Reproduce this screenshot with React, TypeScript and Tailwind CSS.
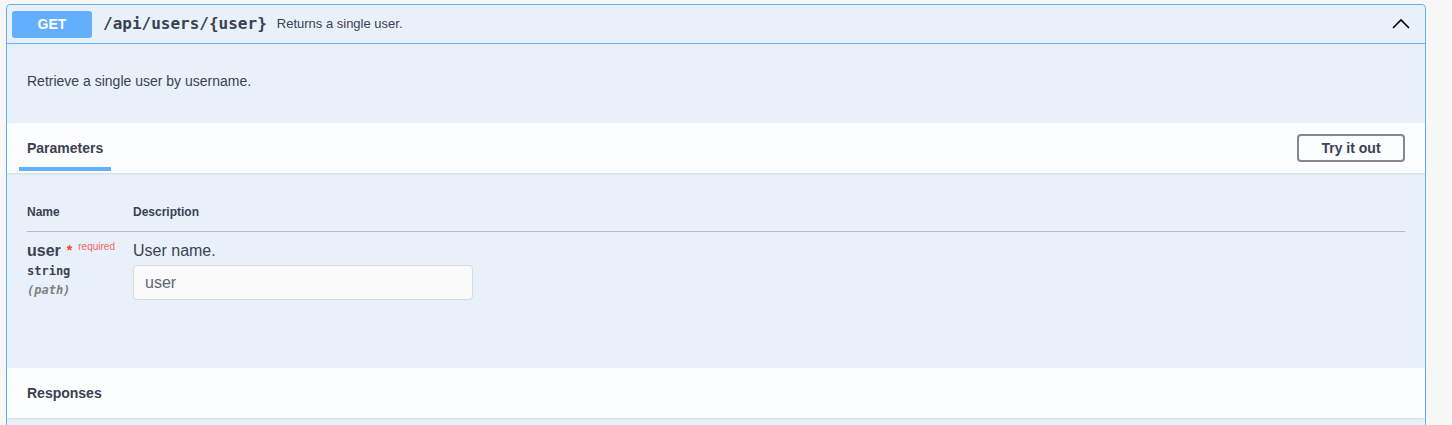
import React from 'react';

const sans = { fontFamily: '"Liberation Sans", Arial, sans-serif' };
const mono = { fontFamily: '"DejaVu Sans Mono", "Liberation Mono", monospace' };

function ChevronUp() {
    return (
        <svg width="20" height="20" viewBox="0 0 20 20" className="text-black">
            <polyline points="2,14 10,6 18,14" fill="none" stroke="currentColor" strokeWidth="1.6" />
        </svg>
    );
}

function SectionHeader(props: { children: React.ReactNode; right?: React.ReactNode }) {
    return (
        <div className="flex items-center justify-between min-h-[50px] px-5 bg-[#fcfdfe] shadow-[0_1px_2px_rgba(0,0,0,0.1)]">
            {props.children}
            {props.right}
        </div>
    );
}

export default function App() {
    return (
        <div className="w-[1452px] h-[425px] overflow-hidden bg-[#f7f7f7] pt-[4px] pl-[6px] text-[#3b4151]" style={sans}>
            <div className="w-[1420px] h-[440px] border border-[#61affe] rounded-[4px] bg-[#e8f1fa]">
                {/* summary */}
                <div className="flex items-center h-[39px] px-[5px] border-b border-[#61affe]">
                    <span className="w-[80px] h-[27px] flex items-center justify-center rounded-[3px] bg-[#61affe] text-white text-[14px] font-bold">GET</span>
                    <span className="ml-[11px] text-[16px] font-bold" style={mono}>/api/users/&#123;user&#125;</span>
                    <span className="ml-[10px] text-[13px] text-[#3b4151]">Returns a single user.</span>
                    <span className="ml-auto mr-[9px] flex items-center"><ChevronUp /></span>
                </div>

                {/* description */}
                <div className="h-[79px] px-5 flex items-center">
                    <p className="text-[14px] leading-[18px] -mt-[6px]">Retrieve a single user by username.</p>
                </div>

                {/* parameters header */}
                <SectionHeader
                    right={
                        <button className="h-[28px] w-[108px] border-2 border-[#888] rounded-[4px] text-[14px] font-bold text-[#3b4151] bg-transparent">Try it out</button>
                    }
                >
                    <div className="relative self-stretch flex items-center">
                        <span className="text-[14px] font-bold">Parameters</span>
                        <span className="absolute left-[-8px] right-[-8px] bottom-[2px] h-[4px] bg-[#61affe]"></span>
                    </div>
                </SectionHeader>

                {/* parameters table */}
                <div className="h-[195px] px-5 pt-[20px]">
                    <div className="flex border-b border-[#3b4151]/30 pt-[12px] pb-[12px] text-[12px] font-bold leading-[14px]">
                        <div className="w-[106px]">Name</div>
                        <div>Description</div>
                    </div>
                    <div className="flex pt-[10px]">
                        <div className="w-[106px]">
                            <div className="flex items-start">
                                <span className="text-[16px] font-bold leading-[18px]">user</span>
                                <span className="ml-[6px] text-[14px] font-bold text-[#ff3b3b] leading-[16px]">*</span>
                                <span className="ml-[6px] -mt-[1px] text-[10px] text-[#ff6060] leading-[12px]">required</span>
                            </div>
                            <div className="mt-[3px] text-[12px] font-semibold leading-[16px]" style={mono}>string</div>
                            <div className="mt-[3px] text-[12px] italic font-semibold text-[#808080] leading-[16px]" style={mono}>(path)</div>
                        </div>
                        <div>
                            <p className="text-[16px] leading-[18px]">User name.</p>
                            <input
                                className="mt-[5px] w-[340px] h-[35px] border border-[#d9d9d9] rounded-[4px] bg-[#fafafa] px-[11px] text-[16px] text-[#3b4151] placeholder:text-[#5f6673] outline-none"
                                style={sans}
                                placeholder="user"
                            />
                        </div>
                    </div>
                </div>

                {/* responses header */}
                <SectionHeader>
                    <span className="text-[14px] font-bold">Responses</span>
                </SectionHeader>
            </div>
        </div>
    );
}
